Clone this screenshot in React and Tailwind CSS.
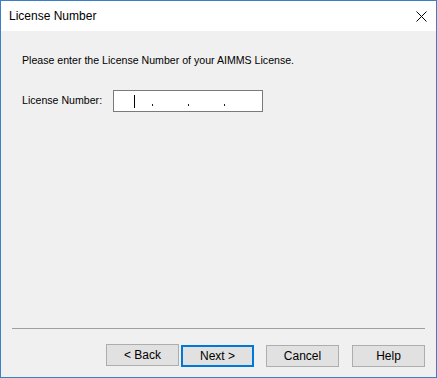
import React from 'react';

const Btn = ({ children, primary }) => (
  <button
    className={
      primary
        ? 'w-[73px] h-[22px] bg-[#e1e1e1] border-2 border-[#0078d7] text-[12px] text-black leading-none'
        : 'w-[73px] h-[22px] bg-[#e1e1e1] border border-[#adadad] text-[12px] text-black leading-none'
    }
  >
    {children}
  </button>
);

const App = () => {
  return (
    <div
      className="w-[437px] h-[378px] border border-[#3c7fc4] flex flex-col bg-[#f0f0f0] text-black"
      style={{ fontFamily: '"Liberation Sans", Arial, sans-serif' }}
    >
      <div className="h-[30px] bg-white flex items-center justify-between pl-[8px] pr-[9px]">
        <span className="text-[12px]">License Number</span>
        <svg width="11" height="11" viewBox="0 0 11 11" className="mt-[1px]">
          <path d="M0.5 0.5 L10.5 10.5 M10.5 0.5 L0.5 10.5" stroke="#000" strokeWidth="1" />
        </svg>
      </div>

      <div className="flex-1 flex flex-col px-[11px]">
        <p className="text-[10.6px] mt-[21px] ml-[10px] leading-[16px]">
          Please enter the License Number of your AIMMS License.
        </p>

        <div className="flex items-center mt-[22px] ml-[10px]">
          <span className="text-[10.6px] w-[91px]">License Number:</span>
          <div className="w-[150px] h-[22px] bg-white border border-[#7a7a7a] flex items-center pl-[20px]">
            <span className="w-[1px] h-[13px] bg-black" />
            <span className="w-[1px] h-[2px] bg-[#1a1a4a] ml-[17px] mt-[8px]" />
            <span className="w-[1px] h-[2px] bg-[#1a1a4a] ml-[35px] mt-[8px]" />
            <span className="w-[1px] h-[2px] bg-[#1a1a4a] ml-[35px] mt-[8px]" />
          </div>
        </div>

        <div className="flex-1" />

        <div className="h-[1px] bg-[#a0a0a0]" />

        <div className="flex justify-end items-center mt-[14px] mb-[10px]">
          <Btn>&lt; Back</Btn>
          <div className="ml-[2px]">
            <Btn primary>Next &gt;</Btn>
          </div>
          <div className="ml-[12px]">
            <Btn>Cancel</Btn>
          </div>
          <div className="ml-[13px]">
            <Btn>Help</Btn>
          </div>
        </div>
      </div>
    </div>
  );
};

export default App;
